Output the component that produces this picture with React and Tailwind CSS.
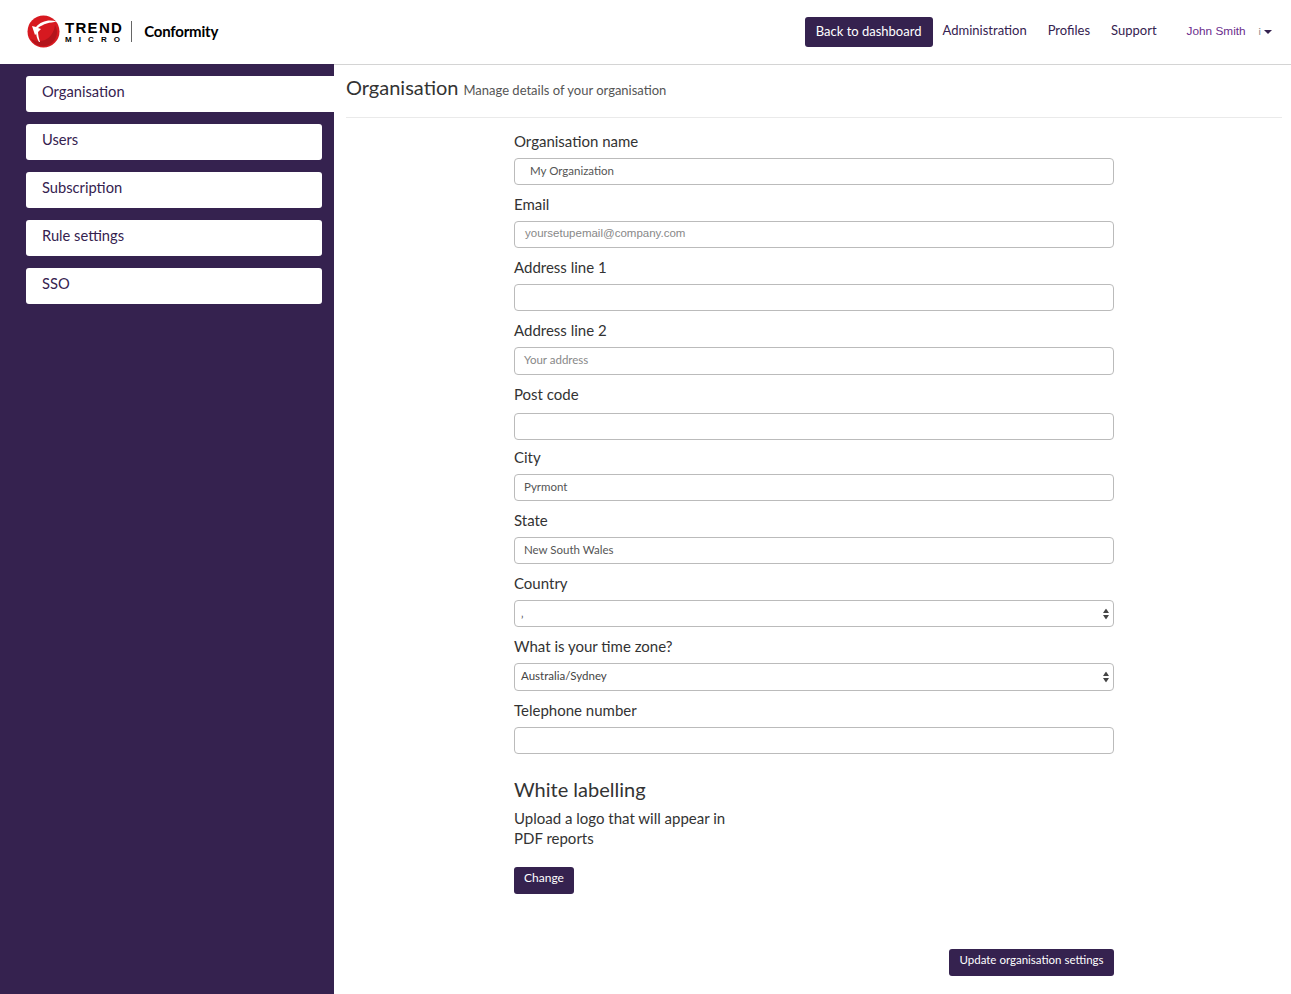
const font = { fontFamily: "Lato, 'Noto Sans', sans-serif" };

const navItems = ["Organisation", "Users", "Subscription", "Rule settings", "SSO"];

const fields = [
  { label: "Organisation name", value: "My Organization", className: "pl-[15px] text-[#555]" },
  { label: "Email", value: "yoursetupemail@company.com", className: "pl-[10px] text-[#888] font-medium font-[Liberation_Sans]" },
  { label: "Address line 1" },
  { label: "Address line 2", value: "Your address", className: "pl-[9px] text-[#888]", tall: true },
  { label: "Post code", tallLabel: true, tight: true },
  { label: "City", value: "Pyrmont", className: "pl-[9px] text-[#555]" },
  { label: "State", value: "New South Wales", className: "pl-[9px] text-[#555]" },
  { label: "Country", value: "‚", className: "pl-[6px] text-[#555]", select: true },
  { label: "What is your time zone?", value: "Australia/Sydney", className: "pl-[6px] text-[#444]", select: true, tall: true },
  { label: "Telephone number" },
];

function TrendLogo() {
  return (
    <div className="mb-[1px] flex items-center">
      <svg width="33" height="33" viewBox="0 0 33 33" className="mr-[5px]">
        <circle cx="16.5" cy="16.5" r="16" fill="#d71920" />
        <path d="M4 24c3 5 8 8 14 7 7-1 12-7 12-14 0-3-1-5-2-7-1 7-4 12-10 15-5 2-10 1-14-1z" fill="#b3141b" />
        <path d="M30 7C23 4 14 6 9 12l-4-1 3 9 6-6-3-1c5-4 12-6 19-6z" fill="#fff" />
        <path d="M9 16c0 4 1 8 3 11l1 0c-1-3-2-7-2-11z" fill="#fff" />
      </svg>
      <div className="flex flex-col text-black" style={{ fontFamily: "'Liberation Sans', sans-serif" }}>
        <span className="text-[15px] leading-[15px] font-bold tracking-[1.3px]">TREND</span>
        <span className="text-[8px] leading-[9px] font-bold tracking-[7.100px]">MICRO</span>
      </div>
      <div className="ml-[4px] h-[21px] w-px bg-[#666]" />
      <span className="ml-[12px] text-[15px] font-bold tracking-[-0.2px] text-black">Conformity</span>
    </div>
  );
}

function SelectArrows() {
  return (
    <svg width="6" height="11" viewBox="0 0 6 11" className="absolute right-[4px] top-1/2 -translate-y-1/2">
      <path d="M3 0l3 4.500H0z" fill="#444" />
      <path d="M3 11l3-4.500H0z" fill="#444" />
    </svg>
  );
}

function Field({ label, value, className, select, tall, tallLabel, tight }) {
  return (
    <div className={tight ? "mb-2" : "mb-[10px]"}>
      <label className={`flex items-center text-[15px] text-[#333] ${tallLabel ? "h-[28px] pb-[10px]" : "h-[26px] pb-[8px]"}`}>
        {label}
      </label>
      <div
        className={`relative flex items-start rounded-[4px] border border-[#bbb] bg-white pt-[3px] text-[11.500px] leading-[17px] ${tall ? "h-[28px]" : "h-[27px]"} ${className || ""}`}
      >
        {value}
        {select && <SelectArrows />}
      </div>
    </div>
  );
}

export default function App() {
  return (
    <div className="flex h-screen flex-col overflow-hidden bg-white" style={font}>
      <header className="flex h-16 shrink-0 items-center justify-between pl-[27px] pr-[19px]">
        <TrendLogo />
        <nav className="flex items-center text-[13px] text-[#35224f]">
          <a className="mb-[1px] flex h-[30px] w-[128px] items-center justify-center rounded-[3px] bg-[#35224f] text-white">
            Back to dashboard
          </a>
          <a className="mb-[3px] ml-[10px]">Administration</a>
          <a className="mb-[3px] ml-[21px]">Profiles</a>
          <a className="mb-[3px] ml-[21px]">Support</a>
          <span className="ml-[30px] text-[11.800px] text-[#6a2c8c]" style={{ fontFamily: "'Liberation Sans', sans-serif" }}>
            John Smith
          </span>
          <span className="ml-[13px] mb-[2px] text-[10px] text-[#888]">i</span>
          <span className="mb-[1px] ml-[3px] h-0 w-0 border-x-[4px] border-t-[4px] border-x-transparent border-t-[#35224f]" />
        </nav>
      </header>

      <div className="flex min-h-0 flex-1">
        <aside className="flex w-[334px] shrink-0 flex-col gap-3 bg-[#35224f] pl-[26px] pt-3">
          {navItems.map((item, i) => (
            <a
              key={item}
              className={`flex h-9 items-center rounded-l-[3px] bg-white pl-4 pb-[5px] text-[14.700px] text-[#35224f] ${i === 0 ? "" : "mr-3 rounded-r-[3px]"}`}
            >
              {item}
            </a>
          ))}
        </aside>

        <main className="flex-1 border-t border-[#d4d4d4] pl-3 pr-[9px]">
          <div className="flex h-[53px] items-baseline border-b border-[#eaeaea] pt-[7px]">
            <h1 className="text-[20px] text-[#333]">Organisation</h1>
            <span className="ml-[5px] text-[13px] text-[#555]">Manage details of your organisation</span>
          </div>

          <form className="ml-[168px] w-[600px] pt-[14px]">
            {fields.map((f) => (
              <Field key={f.label} {...f} />
            ))}

            <h2 className="mt-[21px] text-[20px] leading-[28px] text-[#333]">White labelling</h2>
            <p className="mt-[5px] w-[225px] text-[15px] leading-[20px] text-[#333]">
              Upload a logo that will appear in PDF reports
            </p>
            <button
              type="button"
              className="mt-[19px] block h-[27px] w-[60px] rounded-[3px] bg-[#35224f] pb-[5px] text-[12px] text-white"
            >
              Change
            </button>
            <div className="mt-[55px] flex justify-end">
              <button
                type="button"
                className="h-[27px] w-[165px] rounded-[3px] bg-[#35224f] pb-[5px] text-[11.500px] text-white"
              >
                Update organisation settings
              </button>
            </div>
          </form>
        </main>
      </div>
    </div>
  );
}
